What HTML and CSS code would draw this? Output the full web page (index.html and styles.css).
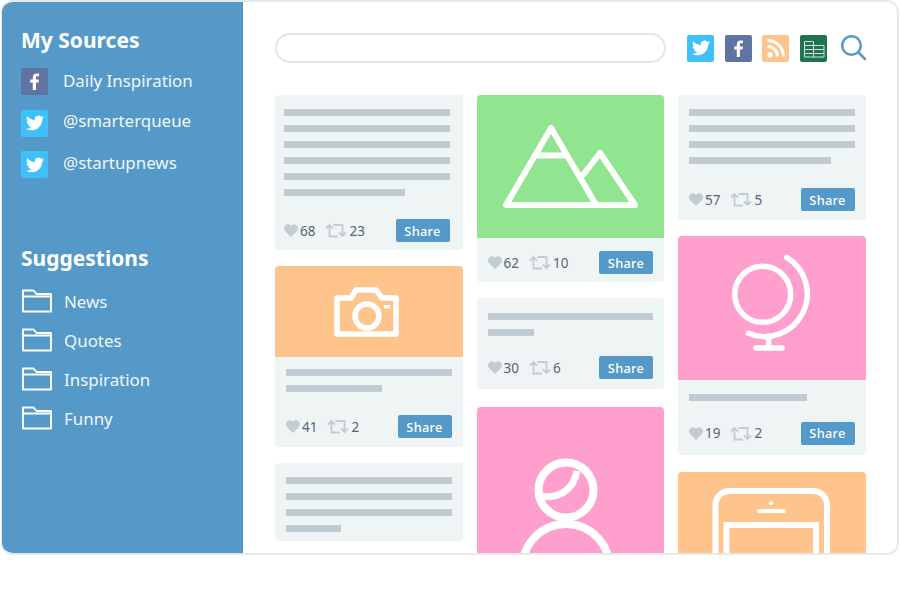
FILE: index.html
```html
<!DOCTYPE html>
<html lang="en">
  <head>
    <meta charset="UTF-8" />
    <title>Smarterqueue</title>
    <link rel="stylesheet" href="styles.css">
  </head>
  <body>
    <svg class="defs" width="0" height="0">
      <symbol id="bird" viewBox="0 0 24 24"><path d="M23.953 4.57a10 10 0 01-2.825.775 4.958 4.958 0 002.163-2.723c-.951.555-2.005.959-3.127 1.184a4.92 4.92 0 00-8.384 4.482C7.69 8.095 4.067 6.13 1.64 3.162a4.822 4.822 0 00-.666 2.475c0 1.71.87 3.213 2.188 4.096a4.904 4.904 0 01-2.228-.616v.06a4.923 4.923 0 003.946 4.827 4.996 4.996 0 01-2.212.085 4.936 4.936 0 004.604 3.417 9.867 9.867 0 01-6.102 2.105c-.39 0-.779-.023-1.17-.067a13.995 13.995 0 007.557 2.209c9.053 0 13.998-7.496 13.998-13.985 0-.21 0-.42-.015-.63A9.935 9.935 0 0024 4.59z"/></symbol>
      <symbol id="fb" viewBox="0 0 27 27"><path d="M14.9 22v-7.6h2.6l.4-3h-3V9.6c0-.9.3-1.4 1.5-1.4H18V5.5c-.3 0-1.2-.1-2.3-.1-2.300 0-3.900 1.400-3.900 4v2h-2.600v3h2.600V22z"/></symbol>
      <symbol id="folder" viewBox="0 0 30 24"><path d="M1 22.500V1.500h10.500l3 3.500H29v17.500zM1 7.500h28" fill="none" stroke="currentColor" stroke-width="1.900" stroke-linejoin="round"/></symbol>
      <symbol id="heart" viewBox="0 0 14 13"><path d="M7 13 1.200 7.200C-.4 5.600-.4 3 1.200 1.400 2.800-.2 5.400-.2 7 1.800 8.600-.2 11.200-.2 12.800 1.400c1.600 1.600 1.600 4.200 0 5.800z"/></symbol>
      <symbol id="retweet" viewBox="0 0 22 15"><path d="M1 5.500 4.500 2 8 5.500M4.500 2v11.500H13M21 9.500 17.500 13 14 9.500M17.500 13V2H8.500" fill="none" stroke="currentColor" stroke-width="1.800"/></symbol>
    </svg>

    <div class="frame">
      <aside class="sidebar">
        <h2>My Sources</h2>
        <ul class="sources">
          <li><span class="badge fb"><svg width="27" height="27"><use href="#fb"/></svg></span><span class="label">Daily Inspiration</span></li>
          <li><span class="badge tw"><svg width="18" height="18"><use href="#bird"/></svg></span><span class="label">@smarterqueue</span></li>
          <li><span class="badge tw"><svg width="18" height="18"><use href="#bird"/></svg></span><span class="label">@startupnews</span></li>
        </ul>
        <h2 class="second">Suggestions</h2>
        <ul class="folders">
          <li><svg width="30" height="24"><use href="#folder"/></svg>News</li>
          <li><svg width="30" height="24"><use href="#folder"/></svg>Quotes</li>
          <li><svg width="30" height="24"><use href="#folder"/></svg>Inspiration</li>
          <li><svg width="30" height="24"><use href="#folder"/></svg>Funny</li>
        </ul>
      </aside>

      <main class="content">
        <div class="topbar">
          <input class="search" type="text">
          <div class="tools">
            <span class="badge tw"><svg width="18" height="18"><use href="#bird"/></svg></span>
            <span class="badge fb"><svg width="27" height="27"><use href="#fb"/></svg></span>
            <span class="badge rss">
              <svg width="27" height="27" viewBox="0 0 27 27" fill="none" stroke="#fff" stroke-width="3">
                <circle cx="8" cy="20" r="2.800" fill="#fff" stroke="none"/>
                <path d="M5.500 11.500a10 10 0 0 1 10 10M5.500 5.500a16 16 0 0 1 16 16"/>
              </svg>
            </span>
            <span class="badge sheet">
              <svg width="27" height="27" viewBox="0 0 27 27" fill="none" stroke="#cfe3d9" stroke-width="1">
                <path d="M4.500 6.500h9v4h10.500v11.500h-19.500zM4.500 10.500h9M4.500 14.500h19.500M4.500 18.500h19.500M13.500 10.500v11.500"/>
              </svg>
            </span>
            <svg class="lens" width="26" height="26" viewBox="0 0 26 26" fill="none" stroke="#5499c7" stroke-width="2.500" stroke-linecap="round">
              <circle cx="10.500" cy="10.500" r="9.300"/>
              <path d="M17.500 17.500 24 24"/>
            </svg>
          </div>
        </div>

        <div class="columns">
          <div class="column">
            <article class="card left-heavy">
              <div class="lines">
                <i></i><i></i><i></i><i></i><i></i><i class="w-73"></i>
              </div>
              <div class="foot">
                <svg class="heart" width="14" height="13"><use href="#heart"/></svg><b>68</b>
                <svg class="rt" width="22" height="15"><use href="#retweet"/></svg><b>23</b>
                <button class="share">Share</button>
              </div>
            </article>
            <article class="card">
              <div class="pic orange short">
                <svg width="187" height="91" viewBox="0 0 187 91" fill="none" stroke="#fff" stroke-width="5.500" stroke-linejoin="round">
                  <path d="M62 32h14l5-8h20l6 8h14v36H62z"/>
                  <circle cx="92" cy="50" r="12"/>
                  <rect x="109" y="39" width="6" height="3.500" fill="#fff" stroke="none"/>
                </svg>
              </div>
              <div class="lines">
                <i></i><i class="w-58"></i>
              </div>
              <div class="foot pad-low">
                <svg class="heart" width="14" height="13"><use href="#heart"/></svg><b>41</b>
                <svg class="rt" width="22" height="15"><use href="#retweet"/></svg><b>2</b>
                <button class="share">Share</button>
              </div>
            </article>
            <article class="card">
              <div class="lines">
                <i></i><i></i><i></i><i class="w-33"></i>
              </div>
            </article>
          </div>

          <div class="column">
            <article class="card">
              <div class="pic green">
                <svg width="187" height="143" viewBox="0 0 187 143" fill="none" stroke="#fff" stroke-width="6" stroke-linejoin="round" stroke-linecap="round">
                  <path d="M74 33 29 110h129L123 58l-17 22M74 33l44 75M58 60.500h32"/>
                </svg>
              </div>
              <div class="foot">
                <svg class="heart" width="14" height="13"><use href="#heart"/></svg><b>62</b>
                <svg class="rt" width="22" height="15"><use href="#retweet"/></svg><b>10</b>
                <button class="share">Share</button>
              </div>
            </article>
            <article class="card">
              <div class="lines top-15">
                <i></i><i class="w-28"></i>
              </div>
              <div class="foot tight">
                <svg class="heart" width="14" height="13"><use href="#heart"/></svg><b>30</b>
                <svg class="rt" width="22" height="15"><use href="#retweet"/></svg><b>6</b>
                <button class="share">Share</button>
              </div>
            </article>
            <article class="card push-2">
              <div class="pic pink tall">
                <svg width="187" height="187" viewBox="0 0 187 187" fill="none" stroke="#fff" stroke-width="8">
                  <circle cx="89" cy="83" r="27.500"/>
                  <path d="M62 89C80 92 96 85 100 64" stroke-width="7"/>
                  <circle cx="89" cy="160.500" r="43.500"/>
                </svg>
              </div>
            </article>
          </div>

          <div class="column">
            <article class="card">
              <div class="lines">
                <i></i><i></i><i></i><i class="w-86"></i>
              </div>
              <div class="foot loose">
                <svg class="heart" width="14" height="13"><use href="#heart"/></svg><b>57</b>
                <svg class="rt" width="22" height="15"><use href="#retweet"/></svg><b>5</b>
                <button class="share">Share</button>
              </div>
            </article>
            <article class="card">
              <div class="pic pink globe">
                <svg width="187" height="144" viewBox="0 0 187 144" fill="none" stroke="#fff" stroke-width="5.500" stroke-linecap="round">
                  <circle cx="84.700" cy="58.300" r="28"/>
                  <path d="M108.700 21.300A42.700 42.700 0 0 1 70.300 97.300M90.700 100v12M78 112h26"/>
                </svg>
              </div>
              <div class="lines top-14">
                <i class="w-71"></i>
              </div>
              <div class="foot globe-foot">
                <svg class="heart" width="14" height="13"><use href="#heart"/></svg><b>19</b>
                <svg class="rt" width="22" height="15"><use href="#retweet"/></svg><b>2</b>
                <button class="share">Share</button>
              </div>
            </article>
            <article class="card push-1">
              <div class="pic orange tall">
                <svg width="187" height="187" viewBox="0 0 187 187" fill="none" stroke="#fff" stroke-width="6">
                  <path d="M37.500 187V33a14 14 0 0 1 14-14H135a14 14 0 0 1 14 14v154M48.500 187V53H138v134"/>
                  <circle cx="93" cy="31.300" r="2" fill="#fff" stroke="none"/>
                  <path d="M81 39h25" stroke-width="4" stroke-linecap="round"/>
                </svg>
              </div>
            </article>
          </div>
        </div>
      </main>
    </div>
  </body>
</html>
```

FILE: styles.css
```css
* {
  margin: 0;
  padding: 0;
  box-sizing: border-box;
}

body {
  background: #fff;
  font-family: "Noto Sans", "Open Sans", sans-serif;
  padding: 0 1px;
}

.defs {
  display: block;
}

.frame {
  display: flex;
  width: 898px;
  height: 555px;
  border: 2px solid #e8e9ea;
  border-left-width: 1px;
  border-radius: 12px;
  overflow: hidden;
  background: #fff;
}

/* sidebar */
.sidebar {
  width: 241px;
  flex: none;
  background: #5499c7;
  border-right: 1px solid #4a8fbe;
  color: #fff;
  padding: 24px 0 0 19px;
}

.sidebar h2 {
  font-size: 21px;
  line-height: 28px;
  font-weight: 700;
}

.sidebar h2.second {
  margin-top: 66px;
}

.sidebar ul {
  list-style: none;
}

.sources {
  margin-top: 14px;
}

.sources li {
  display: flex;
  align-items: center;
  height: 27px;
  margin-bottom: 14.500px;
  font-size: 16.900px;
  color: #f1f7fb;
}

.sources .badge {
  margin-right: 15px;
}

.sources .label {
  margin-bottom: 3px;
}

.sources li + li .label {
  margin-bottom: 5px;
}

.folders {
  margin-top: 17px;
}

.folders li {
  display: flex;
  align-items: center;
  height: 24px;
  margin-bottom: 15px;
  font-size: 16.900px;
  color: #f1f7fb;
}

.folders svg {
  margin: 0 12px 0 1px;
  color: #fff;
}

.badge {
  display: flex;
  align-items: center;
  justify-content: center;
  width: 27px;
  height: 27px;
  flex: none;
  border-radius: 2px;
  fill: #fff;
}

.tw { background: #3fc0fb; }
.fb { background: #5f74a2; }
.rss { background: #fec48b; }
.sheet { background: #1f7350; }

/* main area */
.content {
  flex: 1;
  min-width: 0;
  padding: 31px 0 0 32px;
}

.topbar {
  display: flex;
  align-items: center;
  height: 30px;
}

.search {
  width: 391px;
  height: 30px;
  border: 2px solid #e1e6e9;
  border-radius: 15px;
  outline: none;
  background: #fff;
}

.tools {
  display: flex;
  align-items: center;
  margin-left: 21px;
  gap: 10.700px;
}

.lens {
  margin-left: 3.500px;
}

.columns {
  display: flex;
  gap: 14px;
  margin-top: 32px;
}

.column {
  width: 187.500px;
  flex: none;
  display: flex;
  flex-direction: column;
  gap: 16px;
}

.card {
  background: #eff4f5;
  border-radius: 4px;
  overflow: hidden;
}

.push-1 { margin-top: 1px; }
.push-2 { margin-top: 2px; }

.pic {
  height: 143px;
}

.pic svg {
  display: block;
}

.pic.short { height: 91px; }
.pic.tall { height: 187px; }
.pic.globe { height: 144px; }

.green { background: #92e590; }
.orange { background: #fec48b; }
.pink { background: #fe9fce; }

.lines {
  padding: 12px 11px 0 11px;
}

.card > .lines:first-child {
  padding-top: 14px;
}

.card > .lines.top-15 {
  padding-top: 15px;
}

.lines.top-14 {
  padding-top: 14px;
}

.lines i {
  display: block;
  height: 6.500px;
  background: #bfcad1;
  margin-bottom: 9.500px;
}

.left-heavy .lines { padding-left: 9px; padding-right: 13px; }
.left-heavy .foot { padding-left: 9px; padding-right: 13px; }

.w-73 { width: 73%; }
.w-58 { width: 58%; }
.w-33 { width: 33%; }
.w-28 { width: 28%; }
.w-86 { width: 86%; }
.w-71 { width: 71%; }

.foot {
  display: flex;
  align-items: center;
  padding: 13px 11px 8px 11px;
  font-size: 13.500px;
  color: #566478;
}

.lines + .foot {
  padding-top: 14px;
}

.lines + .foot.pad-low {
  padding-bottom: 9px;
}

.lines + .foot.loose {
  padding-top: 15px;
  padding-bottom: 9px;
}

.lines + .foot.tight {
  padding-top: 11px;
  padding-bottom: 9.500px;
}

.lines + .foot.globe-foot {
  padding-top: 11.500px;
  padding-bottom: 10.500px;
}

.foot b {
  font-weight: 400;
  margin-left: 2px;
}

.heart {
  fill: #c2ccd3;
}

.rt {
  color: #c2ccd3;
  margin-left: 10px;
}

.share {
  margin-left: auto;
  width: 54px;
  height: 23px;
  border: none;
  border-radius: 2px;
  background: #5499c7;
  color: #fff;
  font-family: "Noto Sans", "Open Sans", sans-serif;
  font-size: 12.800px;
  font-weight: 500;
  letter-spacing: .3px;
}
```
